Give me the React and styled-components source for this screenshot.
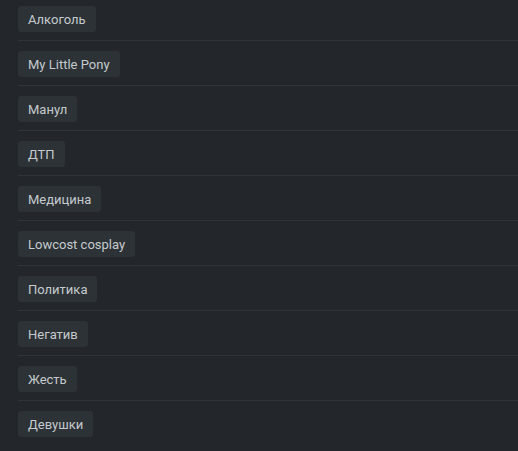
import React from "react";
import styled, { createGlobalStyle } from "styled-components";

const GlobalStyle = createGlobalStyle`
  html, body {
    margin: 0;
    padding: 0;
    background: #23272b;
  }
  body {
    font-family: Roboto, "Noto Sans", Arial, sans-serif;
    overflow: hidden;
  }
`;

const Container = styled.div`
  width: 518px;
  height: 451px;
  overflow: hidden;
  background: #23272b;
`;

const List = styled.ul`
  list-style: none;
  margin: -4px 0 0 18px;
  padding: 0;
`;

const Row = styled.li`
  display: flex;
  align-items: center;
  padding: 10px 0 8px;
  border-bottom: 1px solid #2f3438;

  &:last-child {
    border-bottom: none;
  }
`;

const Tag = styled.a`
  display: inline-flex;
  align-items: center;
  height: 26px;
  padding: 0 10px;
  border-radius: 3px;
  background: #2d3236;
  color: #c5cace;
  font-size: 13px;
  text-decoration: none;
  cursor: pointer;
`;

const tags = [
  "Алкоголь",
  "My Little Pony",
  "Манул",
  "ДТП",
  "Медицина",
  "Lowcost cosplay",
  "Политика",
  "Негатив",
  "Жесть",
  "Девушки",
];

const App = () => {
  return (
    <Container>
      <GlobalStyle />
      <List>
        {tags.map((tag) => (
          <Row key={tag}>
            <Tag>{tag}</Tag>
          </Row>
        ))}
      </List>
    </Container>
  );
};

export default App;
